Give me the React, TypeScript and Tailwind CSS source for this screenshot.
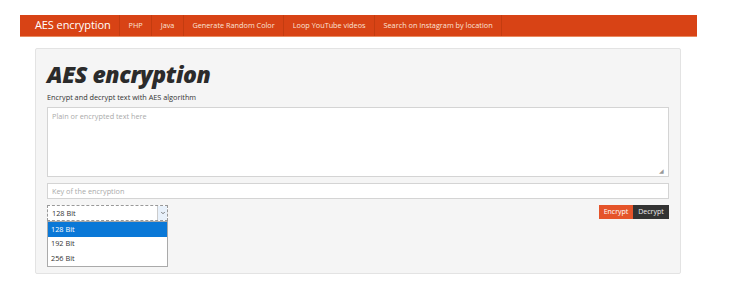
import { ChevronDown } from 'lucide-react';

const navLinks = ['PHP', 'Java', 'Generate Random Color', 'Loop YouTube videos', 'Search on Instagram by location'];

const options = ['128 Bit', '192 Bit', '256 Bit'];

export default function App() {
    return (
        <div className="h-[297px] w-[738px] bg-white font-['Open_Sans',sans-serif] text-[#333]">
            {/* Navbar */}
            <div className="pt-[15px]">
                <nav className="ml-5 flex h-[22px] w-[677px] items-stretch border-b border-[#e98a5f] bg-[#d84315]">
                    <div className="flex w-[100px] shrink-0 items-center border-r border-[#c43c10] pl-[15px] text-[11px] tracking-[-0.1px] text-white">
                        AES encryption
                    </div>
                    {navLinks.map((link) => (
                        <div
                            key={link}
                            className="flex items-center border-r border-[#c43c10] px-[8.5px] text-[7.3px] text-[#fbe3d8]"
                        >
                            {link}
                        </div>
                    ))}
                </nav>
            </div>

            {/* Panel */}
            <div className="ml-[35px] mt-[11px] h-[226px] w-[646px] rounded-[2px] border border-[#e3e3e3] bg-[#f5f5f5] px-[11px] pt-[12px]">
                <h1 className="text-[23px] font-extrabold italic leading-[26px] tracking-[-0.4px] text-[#2b2b2b]">
                    AES encryption
                </h1>
                <p className="mt-[4px] text-[7.3px] leading-[12px] text-[#333]">Encrypt and decrypt text with AES algorithm</p>

                <div className="mt-[4px] flex h-[70px] flex-col border border-[#d4d4d4] bg-white px-[4px] pt-[3px]">
                    <span className="text-[7.3px] text-[#aaa]">Plain or encrypted text here</span>
                    <div className="mt-auto mb-[2px] self-end text-[6px] leading-none text-[#999]">◢</div>
                </div>

                <div className="mt-[6px] flex h-[16px] items-center border border-[#d4d4d4] bg-white px-[4px] text-[7.3px] text-[#aaa]">
                    Key of the encryption
                </div>

                <div className="mt-[6px] flex items-start justify-between">
                    <div className="relative">
                        <div className="flex h-[16px] w-[121px] items-center justify-between border border-dashed border-[#999] bg-white pl-[4px] text-[7.3px] text-[#333]">
                            <span>128 Bit</span>
                            <div className="flex h-full w-[10px] items-center justify-center border-l border-[#ccc] bg-[#e8f1fb]">
                                <ChevronDown className="h-[6px] w-[6px] text-[#555]" strokeWidth={3} />
                            </div>
                        </div>
                        <div className="absolute left-0 top-[16px] w-[121px] border border-[#aaa] bg-white text-[7.3px] text-[#333]">
                            {options.map((opt, i) => (
                                <div
                                    key={opt}
                                    className={`flex h-[14.5px] items-center pl-[3px] ${i === 0 ? 'bg-[#0a78d7] text-white' : ''}`}
                                >
                                    {opt}
                                </div>
                            ))}
                        </div>
                    </div>
                    <div className="flex">
                        <button className="flex h-[14px] w-[34px] items-center justify-center bg-[#e5542a] text-[7px] text-white">
                            Encrypt
                        </button>
                        <button className="flex h-[14px] w-[36px] items-center justify-center bg-[#333] text-[7px] text-[#eee]">
                            Decrypt
                        </button>
                    </div>
                </div>
            </div>
        </div>
    );
}
